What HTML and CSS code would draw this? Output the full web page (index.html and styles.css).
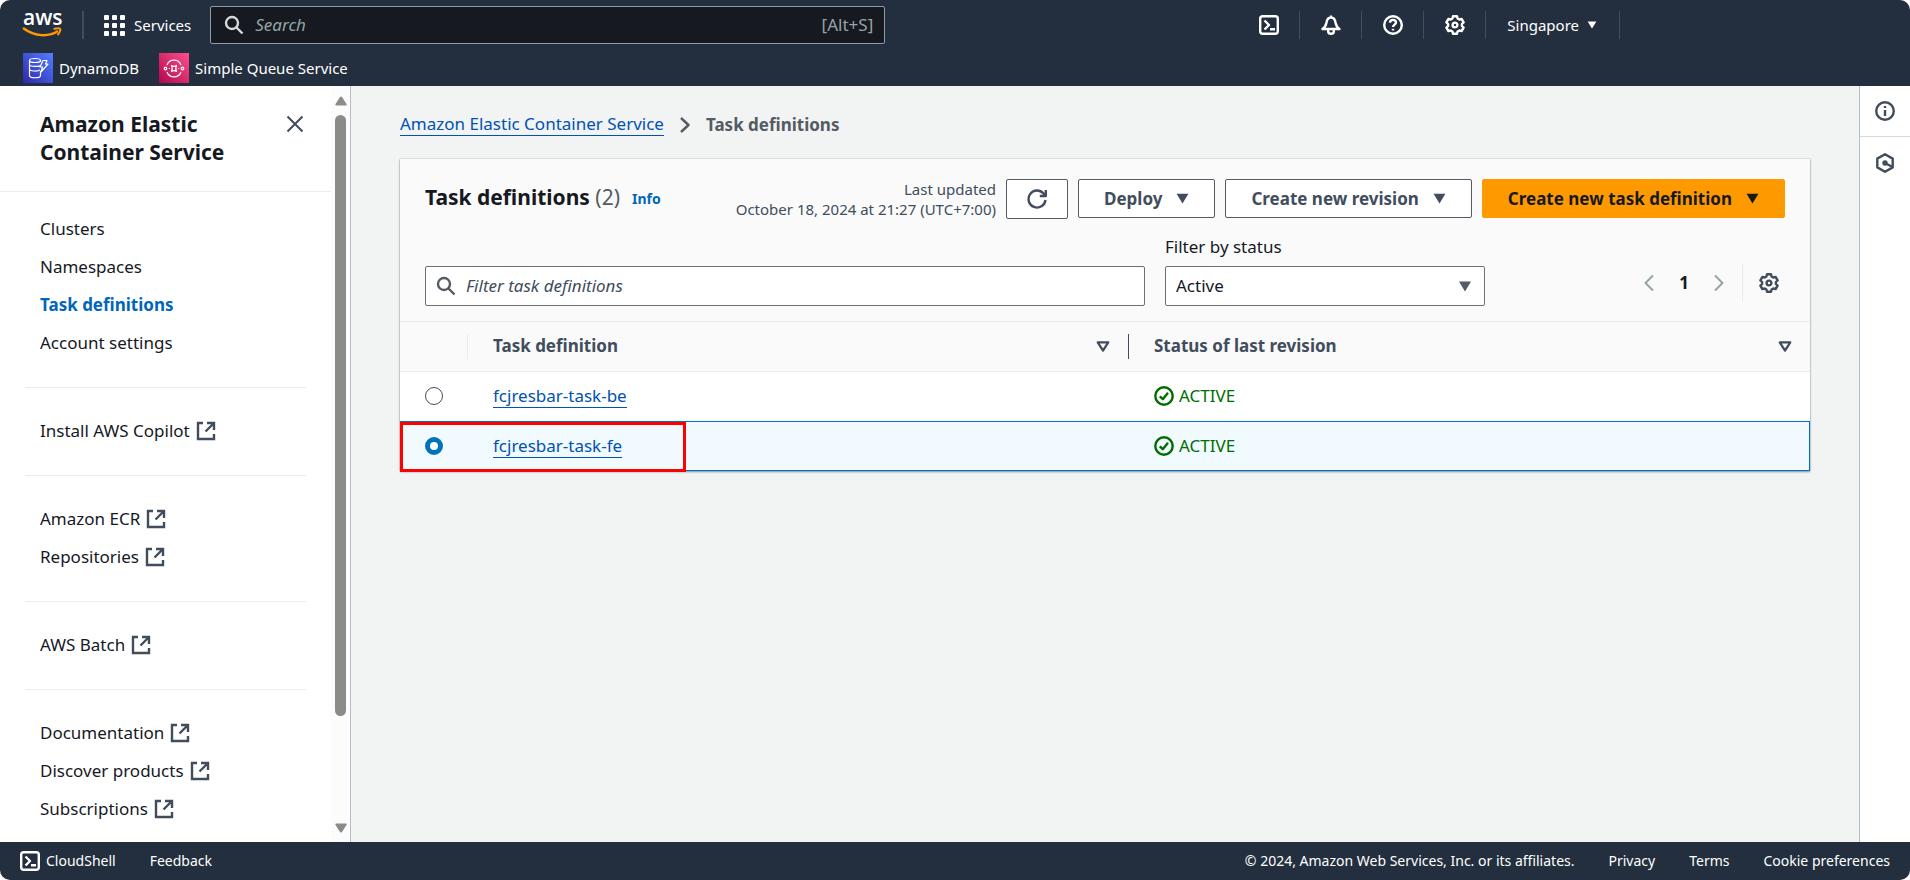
FILE: index.html
```html
<!DOCTYPE html>
<html lang="en">
<head>
<meta charset="utf-8">
<title>Task definitions | Amazon Elastic Container Service</title>
<link rel="stylesheet" href="styles.css">
</head>
<body>
<svg class="sprite" aria-hidden="true">
  <symbol id="gear" viewBox="0 0 20 20"><path d="M8 1.2H12L12.6 3.5L14.3 4.5L16.6 3.9L18.6 7.4L16.9 9V11L18.6 12.6L16.6 16.1L14.3 15.5L12.6 16.5L12 18.8H8L7.4 16.5L5.7 15.5L3.4 16.1L1.4 12.6L3.1 11V9L1.4 7.4L3.4 3.9L5.7 4.5L7.4 3.5Z"/><circle cx="10" cy="10" r="2.4"/></symbol>
  <symbol id="shell" viewBox="0 0 20 20"><rect x="1.2" y="1.2" width="17.6" height="17.6" rx="2.5"/><path d="M5.5 5.5L10 10L5.5 14.500M11 14.200H16"/></symbol>
  <symbol id="search" viewBox="0 0 20 20"><circle cx="8" cy="8" r="6"/><path d="M12.500 12.500L18.500 18.500"/></symbol>
  <symbol id="external" viewBox="0 0 20 20"><path d="M7 2H2V18H18V13M11 2H18V9M18 2L9.500 10.500"/></symbol>
  <symbol id="caret" viewBox="0 0 12 10"><path d="M0.500 0.500H11.500L6 9.500Z"/></symbol>
  <symbol id="sort" viewBox="0 0 12 10"><path d="M1.200 1.200H10.800L6 8.800Z"/></symbol>
  <symbol id="check" viewBox="0 0 20 20"><circle cx="10" cy="10" r="8.700"/><path d="M5.800 10.300L8.800 13.200L14 6.800"/></symbol>
</svg>

<header class="topbar">
  <div class="nav-row">
    <a class="logo" href="#" aria-label="AWS">
      <svg viewBox="0 0 40 42" width="40" height="42"><text x="1" y="21" class="logo-word">aws</text><path d="M1 24C13 33 27 33 36 27" class="smile"/><path d="M31.500 25C35 24 38 24 38.300 25C38.500 26.500 37.500 29 35.500 31" class="smile thin"/></svg>
    </a>
    <span class="rule"></span>
    <button class="services"><svg viewBox="0 0 21 21" width="21" height="21"><g fill="#fff"><rect width="5" height="5" rx="1"/><rect x="8" width="5" height="5" rx="1"/><rect x="16" width="5" height="5" rx="1"/><rect y="8" width="5" height="5" rx="1"/><rect x="8" y="8" width="5" height="5" rx="1"/><rect x="16" y="8" width="5" height="5" rx="1"/><rect y="16" width="5" height="5" rx="1"/><rect x="8" y="16" width="5" height="5" rx="1"/><rect x="16" y="16" width="5" height="5" rx="1"/></g></svg>Services</button>
    <label class="global-search"><svg class="stroke bold" width="20" height="20"><use href="#search"/></svg><input type="text" placeholder="Search" aria-label="Search"><span>[Alt+S]</span></label>
    <div class="nav-tools">
      <button class="tool" aria-label="CloudShell"><svg class="stroke bold" width="20" height="20"><use href="#shell"/></svg></button>
      <button class="tool" aria-label="Notifications"><svg class="stroke bold" viewBox="0 0 20 20" width="20" height="20"><path d="M10 0.500V2.500M1.500 14H18.500C15.500 12 15 10.500 14.500 7.500C14 4 12.500 2.500 10 2.500S6 4 5.500 7.500C5 10.500 4.500 12 1.500 14ZM7.200 14.500V16.500C7.200 18.200 8.500 18.800 10 18.800S12.800 18.200 12.800 16.500V14.500"/></svg></button>
      <button class="tool" aria-label="Help"><svg class="stroke bold" viewBox="0 0 20 20" width="20" height="20"><circle cx="10" cy="10" r="8.800"/><path d="M7 7.700C7 4 13 4 13 7.500C13 9.500 10 9.700 10 12M10 13.700V15.500"/></svg></button>
      <button class="tool" aria-label="Settings"><svg class="stroke bold" width="20" height="20"><use href="#gear"/></svg></button>
      <button class="tool region">Singapore<svg class="fill" width="10" height="8" viewBox="0 0 12 10"><use href="#caret"/></svg></button>
    </div>
  </div>
  <nav class="favorites" aria-label="Favorites">
    <a href="#"><svg viewBox="0 0 30 30" width="30" height="30"><defs><linearGradient id="db" x1="0" y1="1" x2="1" y2="0"><stop stop-color="#2e27ad"/><stop offset="1" stop-color="#527fff"/></linearGradient></defs><rect width="30" height="30" fill="url(#db)"/><g class="glyph"><ellipse cx="12" cy="7.500" rx="5.500" ry="2"/><path d="M6.500 7.500V11.500C6.500 14 17 14 18 12M6.500 12V16C6.500 18.500 15 18.500 17 17M6.500 16.500V22.500C6.500 25.500 17.500 25.500 17.500 22.500V18M17.500 7.500V9M20 7.500H24L22.500 11H25L18 19L19.500 14H17Z"/></g></svg>DynamoDB</a>
    <a href="#"><svg viewBox="0 0 30 30" width="30" height="30"><defs><linearGradient id="sqs" x1="0" y1="1" x2="1" y2="0"><stop stop-color="#b0084d"/><stop offset="1" stop-color="#ff4f8b"/></linearGradient></defs><rect width="30" height="30" fill="url(#sqs)"/><g class="glyph"><path d="M8 12C10.500 5.500 19.500 5.500 22 12M8 19C10.500 25.500 19.500 25.500 22 19M12.500 12.500C14 13.500 16 13.500 17.500 12.500C16.500 14.500 16.500 16.500 17.500 18.500C16 17.500 14 17.500 12.500 18.500C13.500 16.500 13.500 14.500 12.500 12.500ZM9.800 15.500H10.800M19.200 15.500H20.200"/><circle cx="6.500" cy="15.500" r="1.300"/><circle cx="23.500" cy="15.500" r="1.300"/></g></svg>Simple Queue Service</a>
  </nav>
</header>

<div class="workspace">
  <aside class="sidebar">
    <div class="side-content">
      <div class="side-head">
        <h2>Amazon Elastic Container Service</h2>
        <button class="close" aria-label="Close"><svg viewBox="0 0 20 20" width="20" height="20" class="stroke"><path d="M2.500 2.500L17.500 17.500M17.500 2.500L2.500 17.500"/></svg></button>
      </div>
      <nav class="side-nav" aria-label="Service">
        <ul>
          <li><a href="#">Clusters</a></li>
          <li><a href="#">Namespaces</a></li>
          <li><a href="#" class="current">Task definitions</a></li>
          <li><a href="#">Account settings</a></li>
        </ul>
        <ul>
          <li><a href="#">Install AWS Copilot<svg class="stroke bold"><use href="#external"/></svg></a></li>
        </ul>
        <ul>
          <li><a href="#">Amazon ECR<svg class="stroke bold"><use href="#external"/></svg></a></li>
          <li><a href="#">Repositories<svg class="stroke bold"><use href="#external"/></svg></a></li>
        </ul>
        <ul>
          <li><a href="#">AWS Batch<svg class="stroke bold"><use href="#external"/></svg></a></li>
        </ul>
        <ul>
          <li><a href="#">Documentation<svg class="stroke bold"><use href="#external"/></svg></a></li>
          <li><a href="#">Discover products<svg class="stroke bold"><use href="#external"/></svg></a></li>
          <li><a href="#">Subscriptions<svg class="stroke bold"><use href="#external"/></svg></a></li>
        </ul>
      </nav>
    </div>
    <div class="scrollbar" aria-hidden="true">
      <svg viewBox="0 0 12 10" width="12" height="10"><path d="M5 1Q6 0 7 1L11.500 8Q12 9.500 11 9.500H1Q0 9.500 0.500 8Z"/></svg>
      <div class="track"><div class="thumb"></div></div>
      <svg viewBox="0 0 12 10" width="12" height="10"><path d="M5 9Q6 10 7 9L11.500 2Q12 0.500 11 0.500H1Q0 0.500 0.500 2Z"/></svg>
    </div>
  </aside>

  <main class="main">
    <nav class="breadcrumbs" aria-label="Breadcrumbs">
      <a href="#">Amazon Elastic Container Service</a>
      <svg class="stroke bold" viewBox="0 0 12 18" width="12" height="18"><path d="M2 2L9.500 9L2 16"/></svg>
      <strong>Task definitions</strong>
    </nav>

    <section class="panel">
      <div class="panel-head">
        <div class="title-row">
          <h1>Task definitions <span>(2)</span></h1>
          <a class="info" href="#">Info</a>
          <div class="actions">
            <p>Last updated<br>October 18, 2024 at 21:27 (UTC+7:00)</p>
            <button class="btn refresh" aria-label="Refresh"><svg class="stroke bold" viewBox="0 0 20 20" width="20" height="20"><path d="M18.500 11A8.500 8.500 0 1 1 16.500 4.500L18.500 6.500M18.800 1V7H12.800"/></svg></button>
            <button class="btn">Deploy<svg class="fill" width="13" height="11" viewBox="0 0 12 10"><use href="#caret"/></svg></button>
            <button class="btn">Create new revision<svg class="fill" width="13" height="11" viewBox="0 0 12 10"><use href="#caret"/></svg></button>
            <button class="btn primary">Create new task definition<svg class="fill" width="13" height="11" viewBox="0 0 12 10"><use href="#caret"/></svg></button>
          </div>
        </div>
        <div class="filter-row">
          <label class="filter-box"><svg class="stroke bold" width="20" height="20"><use href="#search"/></svg><input type="text" placeholder="Filter task definitions" aria-label="Filter task definitions"></label>
          <div class="status-filter">
            <label for="status">Filter by status</label>
            <div class="select"><select id="status"><option>Active</option></select><svg class="fill" width="14" height="11" viewBox="0 0 12 10"><use href="#caret"/></svg></div>
          </div>
          <div class="pager">
            <button aria-label="Previous page"><svg class="stroke" viewBox="0 0 12 18" width="12" height="18"><path d="M10 1.500L2.500 9L10 16.500"/></svg></button>
            <button class="page">1</button>
            <button aria-label="Next page"><svg class="stroke" viewBox="0 0 12 18" width="12" height="18"><path d="M2 1.500L9.500 9L2 16.500"/></svg></button>
            <button class="prefs" aria-label="Preferences"><svg class="stroke bold" width="20" height="20"><use href="#gear"/></svg></button>
          </div>
        </div>
      </div>

      <table>
        <colgroup><col class="c-pick"><col class="c-name"><col></colgroup>
        <thead>
          <tr>
            <th><div class="th pick"></div></th>
            <th><div class="th dark">Task definition<svg class="stroke"><use href="#sort"/></svg></div></th>
            <th><div class="th">Status of last revision<svg class="stroke"><use href="#sort"/></svg></div></th>
          </tr>
        </thead>
        <tbody>
          <tr>
            <td><input type="radio" name="task" aria-label="fcjresbar-task-be"></td>
            <td><a href="#">fcjresbar-task-be</a></td>
            <td><span class="status"><svg class="stroke bold"><use href="#check"/></svg>ACTIVE</span></td>
          </tr>
          <tr class="selected">
            <td><input type="radio" name="task" aria-label="fcjresbar-task-fe" checked></td>
            <td><a href="#">fcjresbar-task-fe</a></td>
            <td><span class="status"><svg class="stroke bold"><use href="#check"/></svg>ACTIVE</span></td>
          </tr>
        </tbody>
      </table>
      <div class="highlight"></div>
    </section>
  </main>

  <aside class="rail">
    <button aria-label="Info"><svg class="stroke bold" viewBox="0 0 20 20" width="20" height="20"><circle cx="10" cy="10" r="8.800"/><path d="M10 9V15M10 5V7"/></svg></button>
    <button aria-label="Tutorials"><svg class="stroke bold" viewBox="0 0 20 20" width="20" height="20"><path d="M10 1.200L17.700 5.600V14.400L10 18.800L2.300 14.400V5.600ZM10 10L16.500 13.500"/><circle cx="10" cy="10" r="1.500"/></svg></button>
  </aside>
</div>

<footer class="footer">
  <button><svg class="stroke bold" width="20" height="20"><use href="#shell"/></svg>CloudShell</button>
  <a href="#">Feedback</a>
  <span class="copyright">© 2024, Amazon Web Services, Inc. or its affiliates.</span>
  <a href="#">Privacy</a>
  <a href="#">Terms</a>
  <a href="#">Cookie preferences</a>
</footer>
</body>
</html>
```

FILE: styles.css
```css
* { box-sizing: border-box; }

body {
  display: grid;
  grid-template-rows: auto 1fr auto;
  height: 100vh;
  margin: 0;
  overflow: hidden;
  background: #fff;
  color: #16191f;
  font: 17px/22px "Noto Sans", "Open Sans", sans-serif;
}

button, input, select { font: inherit; color: inherit; }
button { display: flex; align-items: center; margin: 0; padding: 0; border: 0; background: none; cursor: pointer; }
a { color: inherit; text-decoration: none; }
h1, h2, p, ul { margin: 0; padding: 0; }
ul { list-style: none; }
svg { display: block; flex: none; }

.sprite { position: absolute; width: 0; height: 0; }
.stroke { fill: none; stroke: currentColor; stroke-width: 2; stroke-linejoin: round; }
.stroke.bold { stroke-width: 2.400; }
.fill { fill: currentColor; }

/* Top bar */
.topbar { height: 86px; border-radius: 10px 10px 0 0; background: #232f3e; color: #fff; font-size: 15px; }
.nav-row { display: flex; align-items: center; height: 50px; padding-left: 22px; }
.logo svg { overflow: visible; }
.logo-word { fill: #fff; font: 600 21px "Open Sans", sans-serif; }
.smile { fill: none; stroke: #f90; stroke-width: 2.500; }
.smile.thin { stroke-width: 2; }
.rule { width: 2px; height: 28px; margin: 0 20px; background: #414d5c; }
.services { gap: 9px; }
.services, .tool { white-space: nowrap; }
.global-search {
  display: flex;
  align-items: center;
  gap: 9px;
  flex: 0 1 675px;
  height: 38px;
  margin-left: 19px;
  padding: 0 11px 0 13px;
  border: 1px solid #8d9ba8;
  border-radius: 2px;
  background: #16191f;
  color: #d5dbdb;
  font-size: 17px;
}
.global-search input { flex: 1; min-width: 0; border: 0; outline: 0; background: none; }
.global-search input::placeholder { color: #95a5a6; font-style: italic; opacity: 1; }
.global-search span { color: #95a5a6; }
.nav-tools { display: flex; margin: 0 290px 0 auto; }
.tool { height: 28px; padding: 0 20px 0 21px; border-right: 1px solid #414d5c; }
.region { gap: 8px; padding-right: 22px; }

.favorites { display: flex; gap: 20px; padding: 3px 23px; }
.favorites a { display: flex; align-items: center; gap: 6px; }
.glyph { fill: none; stroke: #fff; stroke-width: 1.200; stroke-linejoin: round; }

/* Workspace */
.workspace { display: grid; grid-template-columns: 351px 1fr 51px; min-height: 0; }
.sidebar { display: flex; min-height: 0; border-right: 1px solid #b6bec9; background: #fff; }
.side-content { flex: 1; overflow: hidden; }
.side-head { display: flex; align-items: flex-start; justify-content: space-between; padding: 24px 26px 25px 40px; border-bottom: 1px solid #eaeded; }
.side-head h2 { width: 200px; font-size: 21px; line-height: 28px; }
.close { margin-top: 4px; color: #414d5c; }
.side-nav { padding: 26px 25px 0; }
.side-nav ul { display: grid; gap: 16px; padding: 0 15px 33px; }
.side-nav ul + ul { padding-top: 32px; border-top: 1px solid #eaeded; }
.side-nav a { display: flex; align-items: center; gap: 6px; }
.side-nav svg { width: 20px; height: 20px; color: #414d5c; stroke-linejoin: miter; }
.side-nav .current { color: #0066bb; font-weight: 700; }
.scrollbar { display: flex; flex-direction: column; align-items: center; gap: 9px; width: 19px; padding: 10px 0 9px; background: #fcfcfc; fill: #8b8b8b; }
.track { flex: 1; }
.thumb { width: 11px; height: 86%; border-radius: 6px; background: #8b8b8b; }

.main { padding: 27px 49px; background: #f2f3f3; }
.breadcrumbs { display: flex; align-items: center; gap: 15px; color: #545b64; }
.breadcrumbs a, td a { border-bottom: 1px solid #0052b3; color: #0052b3; }
.breadcrumbs svg { color: #545b64; }

.panel { position: relative; margin-top: 23px; background: #fff; box-shadow: 0 1px 2px rgba(0, 28, 36, 0.4), 0 0 1px rgba(0, 28, 36, 0.4); }
.panel-head { padding: 20px 25px 15px; background: #fafafa; border-bottom: 1px solid #eaeded; }
.title-row { display: flex; align-items: flex-start; gap: 12px; }
h1 { font-size: 21px; line-height: 36px; }
h1 span { color: #545b64; font-weight: 400; }
.info { color: #0066bb; font-size: 14px; font-weight: 700; line-height: 40px; }
.actions { display: flex; align-items: flex-start; gap: 10px; margin-left: auto; }
.actions p { color: #414d5c; font-size: 15px; line-height: 20px; text-align: right; }
.btn { gap: 14px; height: 39px; padding: 0 25px; border: 1px solid #545b64; border-radius: 2px; background: #fff; color: #414d5c; font-weight: 700; }
.refresh { width: 62px; height: 40px; padding: 0 20px; }
.primary { border-color: #f90; background: #f90; color: #16191f; }

.filter-row { display: flex; align-items: flex-end; gap: 20px; margin-top: 17px; }
.filter-box { display: flex; align-items: center; gap: 8px; flex: 0 1 720px; height: 40px; padding: 0 10px; border: 1px solid #687078; border-radius: 2px; background: #fff; color: #545b64; }
.filter-box input { flex: 1; min-width: 0; border: 0; outline: 0; background: none; }
.filter-box input::placeholder { color: #414d5c; font-style: italic; opacity: 1; }
.status-filter { flex: 0 1 320px; }
.select { display: grid; align-items: center; margin-top: 8px; }
.select > * { grid-area: 1 / 1; }
.select svg { justify-self: end; margin-right: 13px; color: #545b64; pointer-events: none; }
select { appearance: none; width: 100%; height: 40px; padding: 0 10px; border: 1px solid #687078; border-radius: 2px; background: #fff; }
.pager { display: flex; align-items: center; gap: 24px; margin: 0 6px 4px auto; color: #95a5a6; }
.pager .page { color: #16191f; font-weight: 700; }
.prefs { height: 38px; margin-left: -7px; padding-left: 16px; border-left: 1px solid #eaeded; color: #414d5c; }

/* Table */
table { width: 100%; border-collapse: collapse; table-layout: fixed; }
.c-pick { width: 68px; }
.c-name { width: 661px; }
th, td { height: 50px; padding: 0; text-align: left; }
th { height: 49px; }
thead { background: #fafafa; }
thead tr { border-bottom: 1px solid #eaeded; }
.th { display: flex; align-items: center; justify-content: space-between; height: 25px; padding: 0 18px 0 25px; color: #414d5c; }
.th svg { width: 14px; height: 11px; }
.th.pick { border-right: 1px solid #eaeded; }
.th.dark { border-right: 1px solid #414d5c; }
td { padding-left: 25px; }
td input { appearance: none; display: block; width: 18px; height: 18px; margin: 0; border: 1px solid #414d5c; border-radius: 50%; background: #fff; }
td input:checked { border: 5px solid #0073bb; }
.selected { background: #f1faff; outline: 1px solid #0073bb; outline-offset: -1px; }
.status { display: flex; align-items: center; gap: 5px; color: #006d00; }
.status svg { width: 20px; height: 20px; }
.highlight { position: absolute; bottom: -1px; left: 0; width: 286px; height: 50px; border: 3px solid #f00; }

.rail { border-left: 1px solid #b6bec9; background: #fff; }
.rail button { justify-content: center; width: 100%; height: 51px; border-bottom: 1px solid #d5dbdb; color: #414d5c; }
.rail button + button { border: 0; }

.footer { display: flex; align-items: center; gap: 34px; height: 38px; padding: 0 20px; border-radius: 0 0 10px 10px; background: #232f3e; color: #fff; font-size: 14px; }
.footer button { gap: 6px; }
.copyright { margin-left: auto; }
```
